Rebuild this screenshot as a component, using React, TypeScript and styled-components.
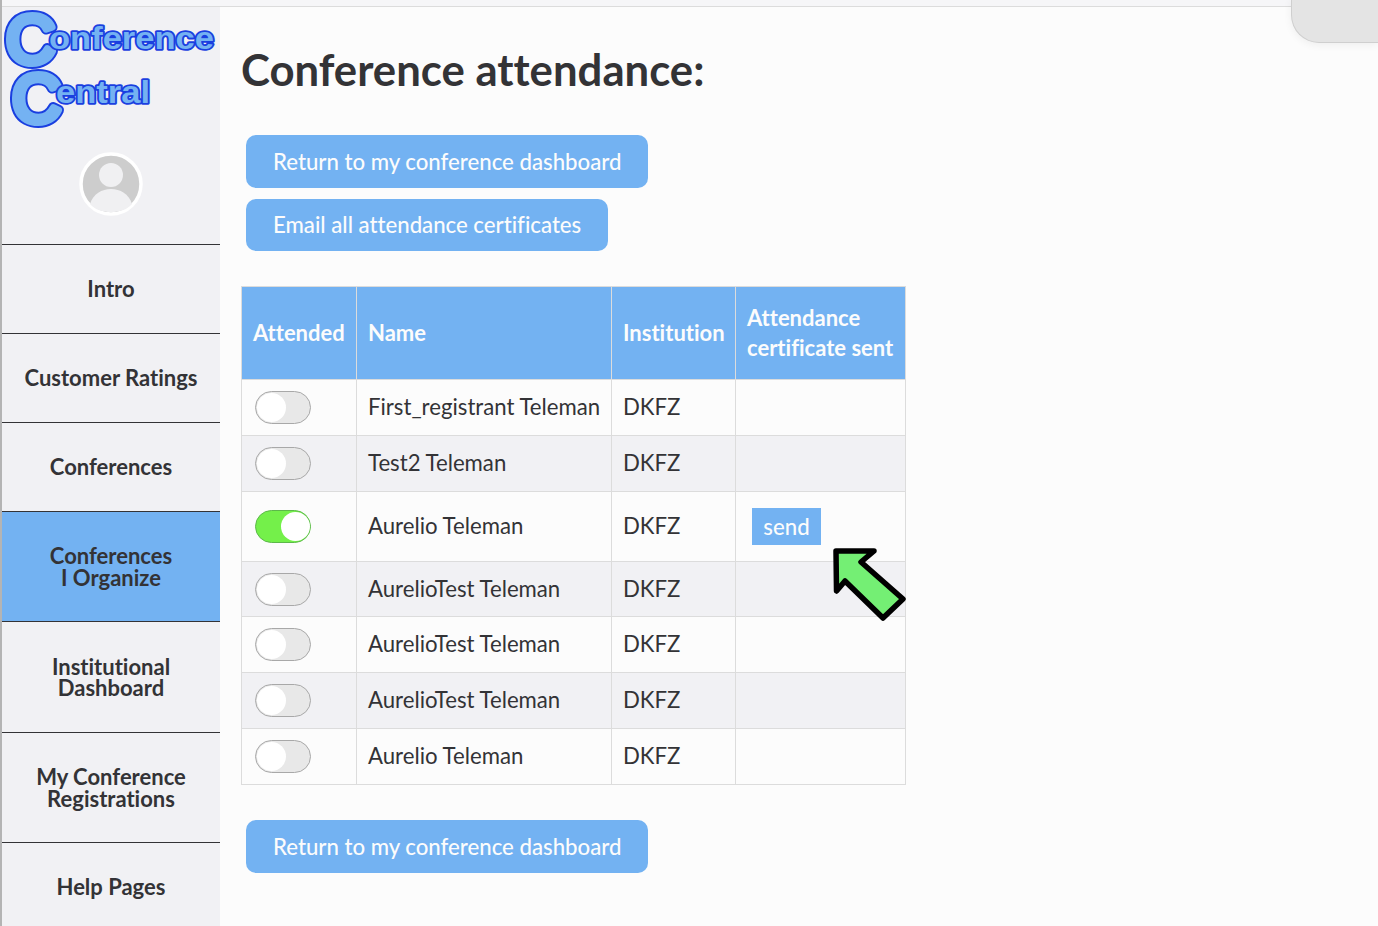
import React from "react";
import styled, { createGlobalStyle } from "styled-components";

const rows = [
  { name: "First_registrant Teleman", on: false, height: 56 },
  { name: "Test2 Teleman", on: false, height: 56 },
  { name: "Aurelio Teleman", on: true, height: 70 },
  { name: "AurelioTest Teleman", on: false, height: 55 },
  { name: "AurelioTest Teleman", on: false, height: 56 },
  { name: "AurelioTest Teleman", on: false, height: 56 },
  { name: "Aurelio Teleman", on: false, height: 56 },
];

const navItems = [
  { label: ["Intro"], height: 89 },
  { label: ["Customer Ratings"], height: 89 },
  { label: ["Conferences"], height: 89 },
  { label: ["Conferences", "I Organize"], height: 110, active: true },
  { label: ["Institutional", "Dashboard"], height: 111 },
  { label: ["My Conference", "Registrations"], height: 110 },
  { label: ["Help Pages"], height: 88 },
];

const Logo = () => (
  <LogoSvg viewBox="0 0 218 124" aria-label="Conference Central">
    <defs>
      <text id="bigC1" x="4" y="55.5" fontSize="68" fontWeight="400">C</text>
      <text id="bigC2" x="10" y="114.5" fontSize="68" fontWeight="400">C</text>
      <text id="line1" x="47" y="42" fontSize="32" textLength="165" lengthAdjust="spacingAndGlyphs">onference</text>
      <text id="line2" x="54" y="96" fontSize="32" textLength="94" lengthAdjust="spacingAndGlyphs">entral</text>
    </defs>
    <BrandLetters>
      <use href="#bigC1" stroke="#1a3fe0" strokeWidth="11" />
      <use href="#bigC2" stroke="#1a3fe0" strokeWidth="11" />
      <use href="#bigC1" stroke="#74b2f2" strokeWidth="7" />
      <use href="#bigC2" stroke="#74b2f2" strokeWidth="7" />
      <use href="#line1" stroke="#1a3fe0" strokeWidth="3.6" />
      <use href="#line2" stroke="#1a3fe0" strokeWidth="3.6" />
      <use href="#line1" />
      <use href="#line2" />
    </BrandLetters>
  </LogoSvg>
);

const Avatar = () => (
  <AvatarSvg viewBox="0 0 64 64">
    <circle cx="32" cy="32" r="30" fill="#cdcdcd" stroke="#fff" strokeWidth="3.5" />
    <circle cx="32" cy="23" r="12" fill="#f0f0f2" />
    <path d="M11 52c3-10 12-15 21-15s18 5 21 15c-5 6-13 8-21 8s-16-2-21-8z" fill="#f0f0f2" />
  </AvatarSvg>
);

const Arrow = () => (
  <ArrowSvg viewBox="0 0 76 76">
    <path
      d="M3 3H41L28 14 70 51 50 70 12 33 3.5 43z"
      fill="#74ef74"
      stroke="#000"
      strokeWidth="5.5"
      strokeLinejoin="round"
    />
  </ArrowSvg>
);

export default function App() {
  return (
    <>
      <GlobalStyle />
      <Page>
        <TopStrip />
        <Body>
          <Sidebar>
            <Brand>
              <Logo />
              <Avatar />
            </Brand>
            {navItems.map((item) => (
              <NavItem key={item.label.join(" ")} $active={item.active} $height={item.height}>
                {item.label.map((line) => (
                  <span key={line}>{line}</span>
                ))}
              </NavItem>
            ))}
          </Sidebar>
          <Main>
            <Title>Conference attendance:</Title>
            <ButtonStack>
              <ActionButton>Return to my conference dashboard</ActionButton>
              <ActionButton>Email all attendance certificates</ActionButton>
            </ButtonStack>
            <TableWrap>
              <Table>
                <thead>
                  <tr>
                    <HeadCell $width={115}>Attended</HeadCell>
                    <HeadCell $width={255}>Name</HeadCell>
                    <HeadCell $width={124}>Institution</HeadCell>
                    <HeadCell $width={170}>
                      Attendance
                      <br />
                      certificate sent
                    </HeadCell>
                  </tr>
                </thead>
                <tbody>
                  {rows.map((row, i) => (
                    <Row key={i} $height={row.height}>
                      <Cell>
                        <Toggle $on={row.on}>
                          <Knob $on={row.on} />
                        </Toggle>
                      </Cell>
                      <TextCell>{row.name}</TextCell>
                      <TextCell>DKFZ</TextCell>
                      <Cell>{row.on && <SendButton>send</SendButton>}</Cell>
                    </Row>
                  ))}
                </tbody>
              </Table>
              <Arrow />
            </TableWrap>
            <ActionButton>Return to my conference dashboard</ActionButton>
          </Main>
        </Body>
        <CornerTab />
      </Page>
    </>
  );
}

const GlobalStyle = createGlobalStyle`
  html, body {
    margin: 0;
    height: 926px;
    overflow: hidden;
    background: #fcfcfc;
    font-family: Lato, "Noto Sans", sans-serif;
    font-variant-ligatures: none;
    color: #333336;
  }
  * {
    box-sizing: border-box;
  }
`;

const Page = styled.div`
  position: relative;
  width: 1378px;
  height: 926px;
  overflow: hidden;
  border-left: 2px solid #b4b4b4;
`;

const TopStrip = styled.div`
  height: 7px;
  background: #f6f6f8;
  border-bottom: 1px solid #dcdcdc;
`;

const Body = styled.div`
  display: flex;
  height: 919px;
`;

const Sidebar = styled.nav`
  width: 218px;
  flex: none;
  background: #f1f1f4;
`;

const Brand = styled.div`
  height: 237px;
  display: flex;
  flex-direction: column;
  align-items: center;
`;

const LogoSvg = styled.svg`
  width: 218px;
  height: 124px;
  flex: none;
  overflow: visible;
`;

const BrandLetters = styled.g`
  fill: #74b2f2;
  font-family: "Liberation Sans", sans-serif;
  font-weight: 700;
  stroke-linejoin: round;
`;

const AvatarSvg = styled.svg`
  width: 64px;
  height: 64px;
  margin-top: 21px;
`;

const NavItem = styled.div<{ $active?: boolean; $height: number }>`
  height: ${(p) => p.$height}px;
  display: flex;
  flex-direction: column;
  align-items: center;
  justify-content: center;
  border-top: 1px solid #333336;
  background: ${(p) => (p.$active ? "#73b2f2" : "transparent")};
  font-size: 22px;
  line-height: 21.5px;
  font-weight: 700;
  color: #333336;
`;

const Main = styled.main`
  flex: 1;
  padding: 38px 0 0 21px;
`;

const Title = styled.h1`
  margin: 0;
  font-size: 43.7px;
  line-height: 48px;
  font-weight: 700;
  color: #333336;
`;

const ButtonStack = styled.div`
  display: flex;
  flex-direction: column;
  align-items: flex-start;
  gap: 11px;
  margin-top: 42px;
`;

const ActionButton = styled.button`
  display: block;
  margin-left: 5px;
  height: 52.5px;
  padding: 0 27px;
  border: none;
  border-radius: 10px;
  background: #73b2f2;
  color: #fcfcfc;
  font: 500 22.2px Lato, "Noto Sans", sans-serif;
  font-variant-ligatures: none;
`;

const TableWrap = styled.div`
  position: relative;
  width: 665px;
  margin: 35px 0 35px;
`;

const Table = styled.table`
  width: 665px;
  table-layout: fixed;
  border-collapse: collapse;
  font-size: 22.2px;
`;

const HeadCell = styled.th<{ $width: number }>`
  width: ${(p) => p.$width}px;
  height: 93px;
  padding: 0 11px;
  border: 1px solid #dcdcdc;
  background: #73b2f2;
  color: #fcfcfc;
  font-size: 22px;
  font-weight: 700;
  line-height: 30px;
  text-align: left;
  white-space: nowrap;
`;

const Row = styled.tr<{ $height: number }>`
  height: ${(p) => p.$height}px;
  &:nth-child(even) {
    background: #f1f1f4;
  }
`;

const Cell = styled.td`
  padding: 0 11px;
  border: 1px solid #dcdcdc;
  color: #333336;
  white-space: nowrap;
`;

const TextCell = styled(Cell)`
  padding-bottom: 2px;
`;

const Toggle = styled.div<{ $on: boolean }>`
  position: relative;
  width: 56px;
  height: 33px;
  margin-left: 2px;
  border-radius: 17px;
  border: 1px solid ${(p) => (p.$on ? "#5cb84a" : "#a8a8a8")};
  background: ${(p) => (p.$on ? "#74f04a" : "#e8e8e8")};
`;

const Knob = styled.div<{ $on: boolean }>`
  position: absolute;
  top: 1px;
  left: ${(p) => (p.$on ? "25px" : "1px")};
  width: 29px;
  height: 29px;
  border-radius: 50%;
  background: #fff;
`;

const SendButton = styled.button`
  display: block;
  margin-left: 5px;
  width: 69px;
  height: 37px;
  border: none;
  background: #73b2f2;
  color: #fcfcfc;
  font: 500 22.2px Lato, "Noto Sans", sans-serif;
`;

const ArrowSvg = styled.svg`
  position: absolute;
  left: 592px;
  top: 262px;
  width: 76px;
  height: 76px;
`;

const CornerTab = styled.div`
  position: absolute;
  top: -2px;
  right: 0;
  width: 87px;
  height: 45px;
  background: #e4e4e4;
  border-left: 1px solid #cfcfcf;
  border-bottom: 1px solid #cfcfcf;
  border-bottom-left-radius: 28px;
  box-shadow: 0 2px 8px rgba(0, 0, 0, 0.06);
`;
